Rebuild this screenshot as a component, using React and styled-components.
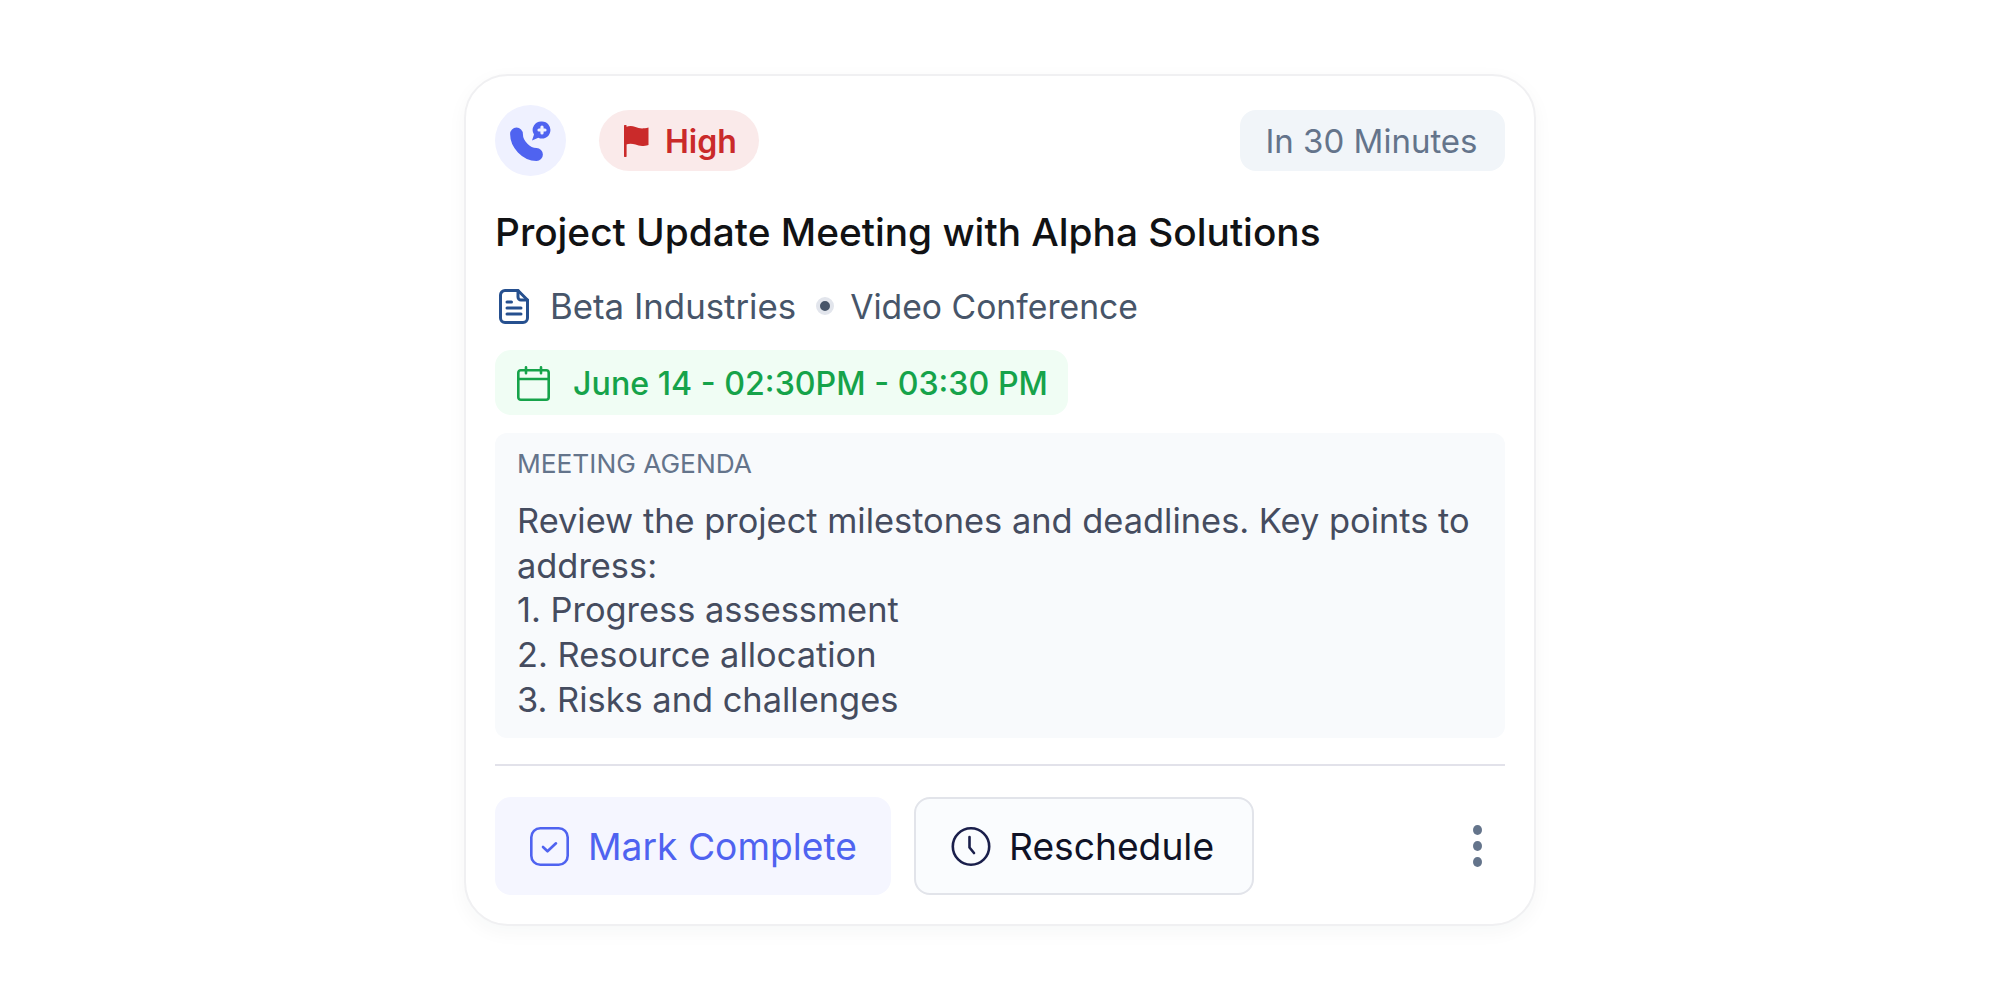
import React from 'react';
import styled, { createGlobalStyle } from 'styled-components';

const GlobalStyle = createGlobalStyle`
  html, body {
    margin: 0;
    padding: 0;
    background: #fff;
    font-family: Inter, "Liberation Sans", sans-serif;
  }
`;

const Page = styled.div`
  display: flex;
  justify-content: center;
  align-items: flex-start;
  width: 2000px;
  height: 1000px;
  padding-top: 74px;
  box-sizing: border-box;
`;

const Card = styled.div`
  width: 1072px;
  height: 852px;
  box-sizing: border-box;
  padding: 29px 29px 28px;
  background: #fff;
  border: 2px solid #f0f0f2;
  border-radius: 44px;
  box-shadow: 0 6px 20px rgba(30, 41, 59, 0.04);
  display: flex;
  flex-direction: column;
`;

const TopRow = styled.div`
  display: flex;
  align-items: center;
`;

const IconCircle = styled.div`
  width: 71px;
  height: 71px;
  border-radius: 50%;
  background: #eff1ff;
  display: flex;
  align-items: center;
  justify-content: center;
`;

const Priority = styled.div`
  margin-left: 33px;
  height: 61px;
  width: 160px;
  box-sizing: border-box;
  padding: 1px 0 0 25px;
  border-radius: 31px;
  background: #faeaea;
  color: #ca2a2a;
  font-size: 32px;
  font-weight: 600;
  display: flex;
  align-items: center;
  gap: 16px;
`;

const TimeTag = styled.div`
  margin-left: auto;
  height: 61px;
  width: 265px;
  box-sizing: border-box;
  padding: 1px 2px 0 0;
  border-radius: 16px;
  background: #f1f5f9;
  color: #64748b;
  font-size: 33px;
  font-weight: 400;
  display: flex;
  align-items: center;
  justify-content: center;
`;

const Title = styled.h2`
  margin: 29px 0 0;
  font-size: 38.800px;
  line-height: 54px;
  font-weight: 500;
  color: #111214;
`;

const MetaRow = styled.div`
  margin-top: 25px;
  height: 44px;
  display: flex;
  align-items: center;
  color: #475569;
  padding-left: 4px;
`;

const MetaText = styled.span`
  margin-left: ${(p) => p.$gap}px;
  font-size: ${(p) => p.$size}px;
`;

const Bullet = styled.span`
  margin-left: 20px;
  width: 18px;
  height: 18px;
  border-radius: 50%;
  background: #475569;
  box-sizing: border-box;
  border: 4px solid #e2e5ec;
`;

const DatePill = styled.div`
  margin-top: 22px;
  align-self: flex-start;
  width: 573px;
  height: 65px;
  box-sizing: border-box;
  padding: 1px 0 0 22px;
  border-radius: 16px;
  background: #f0fdf4;
  color: #16a34a;
  font-size: 32.200px;
  font-weight: 500;
  display: flex;
  align-items: center;
  gap: 23px;
`;

const Agenda = styled.div`
  margin-top: 18px;
  height: 305px;
  box-sizing: border-box;
  padding: 13px 22px 0;
  border-radius: 12px;
  background: #f8fafc;
`;

const AgendaLabel = styled.div`
  font-size: 26.300px;
  line-height: 36px;
  color: #64748b;
  font-weight: 400;
`;

const AgendaBody = styled.div`
  margin-top: 17px;
  font-size: 34.400px;
  line-height: 44.700px;
  color: #454c5f;
  white-space: pre-line;
`;

const Divider = styled.div`
  margin-top: 26px;
  height: 2px;
  background: #e2e2ea;
`;

const Actions = styled.div`
  margin-top: 31px;
  display: flex;
  align-items: center;
  gap: 23px;
`;

const ActionButton = styled.button`
  height: 98px;
  width: ${(p) => p.$width}px;
  box-sizing: border-box;
  padding: 0 0 0 ${(p) => p.$pad}px;
  border-radius: 16px;
  border: ${(p) => (p.$outlined ? '2px solid #e2e4ea' : '2px solid transparent')};
  background: ${(p) => (p.$outlined ? '#fafcfe' : '#f5f6ff')};
  color: ${(p) => (p.$outlined ? '#0f1226' : '#4f63f0')};
  font-family: inherit;
  font-size: 37.200px;
  font-weight: 400;
  display: flex;
  align-items: center;
  gap: ${(p) => p.$gap}px;
`;

const MoreDots = styled.div`
  margin-left: auto;
  margin-right: 23px;
  display: flex;
  flex-direction: column;
  gap: 6px;
`;

const Dot = styled.span`
  width: 9px;
  height: 10px;
  border-radius: 50%;
  background: #64748b;
`;

const PhoneIcon = () => (
  <svg width="41" height="41" viewBox="0 0 41 41" fill="none">
    <path d="M6.500 14C6.500 24 16 34.500 26.500 34.500" stroke="#4f63f0" strokeWidth="12.800" strokeLinecap="round" />
    <path d="M32 1.500a8.500 8.500 0 1 1-3.700 16.200L22 20.500l2-6A8.500 8.500 0 0 1 32 1.500z" fill="#4f63f0" />
    <path d="M32 7v6M29 10h6" stroke="#eff1ff" strokeWidth="3.200" strokeLinecap="round" />
  </svg>
);

const FlagIcon = () => (
  <svg width="25" height="32" viewBox="0 0 25 32">
    <path d="M1.300 1v30" stroke="#ca2a2a" strokeWidth="2.600" strokeLinecap="round" />
    <path d="M2 2c3-1.500 6-1.500 9.500 0s7 2 13 .5V20c-6 1.800-9.500 1-13-.4-3.500-1.300-6.500-1.300-9.500 0z" fill="#ca2a2a" />
  </svg>
);

const FileIcon = () => (
  <svg width="30" height="35" viewBox="0 0 30 35" fill="none" stroke="#26508f" strokeWidth="3" strokeLinecap="round" strokeLinejoin="round">
    <path d="M19 1.500H6A4.500 4.500 0 0 0 1.500 6v23A4.500 4.500 0 0 0 6 33.500h18a4.500 4.500 0 0 0 4.500-4.500V11z" />
    <path d="M19 1.500V8a3 3 0 0 0 3 3h6.500" />
    <path d="M8 13h4.500M8 19h14M8 25h14" />
  </svg>
);

const CalendarIcon = () => (
  <svg width="33" height="35" viewBox="0 0 33 35" fill="none" stroke="#16a34a" strokeWidth="2.600" strokeLinecap="round" strokeLinejoin="round">
    <rect x="1.300" y="4.300" width="30.400" height="29.400" rx="2.500" />
    <path d="M1.300 13h30.400M9 1.300v6M24 1.300v6" />
  </svg>
);

const CheckSquareIcon = () => (
  <svg width="39" height="39" viewBox="0 0 39 39" fill="none" stroke="#4f63f0" strokeWidth="2.600" strokeLinecap="round" strokeLinejoin="round">
    <rect x="1.300" y="1.300" width="36.400" height="36.400" rx="9" />
    <path d="M13 20l4.500 4.300 8.500-8" />
  </svg>
);

const ClockIcon = () => (
  <svg width="40" height="39" viewBox="0 0 40 39" fill="none" stroke="#1a1f4b" strokeWidth="2.600" strokeLinecap="round" strokeLinejoin="round">
    <circle cx="20" cy="19.500" r="18.200" />
    <path d="M18.500 10v10.500l4.500 5.500" />
  </svg>
);

const agenda = `Review the project milestones and deadlines. Key points to address:
1. Progress assessment
2. Resource allocation
3. Risks and challenges`;

export default function App() {
  return (
    <>
      <GlobalStyle />
      <Page>
        <Card>
          <TopRow>
            <IconCircle>
              <PhoneIcon />
            </IconCircle>
            <Priority>
              <FlagIcon />
              High
            </Priority>
            <TimeTag>In 30 Minutes</TimeTag>
          </TopRow>
          <Title>Project Update Meeting with Alpha Solutions</Title>
          <MetaRow>
            <FileIcon />
            <MetaText $gap={21} $size={34.800}>Beta Industries</MetaText>
            <Bullet />
            <MetaText $gap={16} $size={33.700}>Video Conference</MetaText>
          </MetaRow>
          <DatePill>
            <CalendarIcon />
            June 14 - 02:30PM - 03:30 PM
          </DatePill>
          <Agenda>
            <AgendaLabel>MEETING AGENDA</AgendaLabel>
            <AgendaBody>{agenda}</AgendaBody>
          </Agenda>
          <Divider />
          <Actions>
            <ActionButton $width={396} $pad={33} $gap={19}>
              <CheckSquareIcon />
              Mark Complete
            </ActionButton>
            <ActionButton $outlined $width={340} $pad={35} $gap={18}>
              <ClockIcon />
              Reschedule
            </ActionButton>
            <MoreDots>
              <Dot />
              <Dot />
              <Dot />
            </MoreDots>
          </Actions>
        </Card>
      </Page>
    </>
  );
}
